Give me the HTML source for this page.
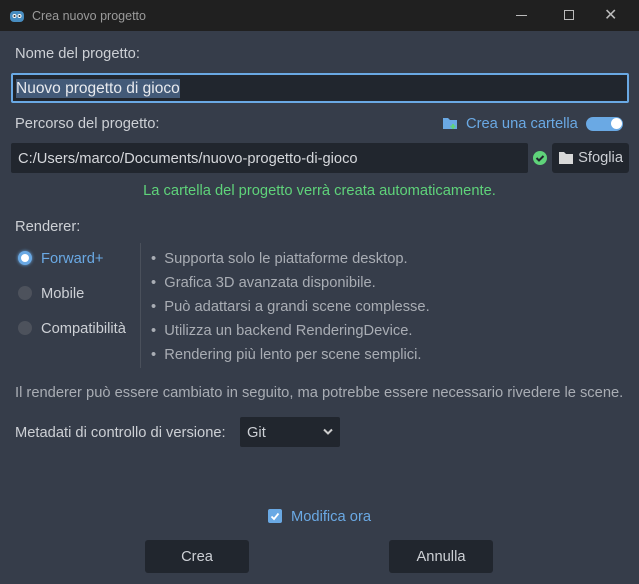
<!DOCTYPE html><html><head><style>
*{margin:0;padding:0;box-sizing:border-box}
body{width:639px;height:584px;background:#363d4a;font-family:"Liberation Sans","DejaVu Sans",sans-serif;font-size:14.7px;color:#cdd0d5;position:relative;overflow:hidden}
.a{position:absolute;white-space:nowrap}
.t{line-height:20px}
.inp{position:absolute;background:#21262e;border-radius:2px}
.btn{position:absolute;background:#21262e;border-radius:3px;text-align:center;line-height:35px}
.rad{position:absolute;width:14px;height:14px;border-radius:50%;background:#4d525c}
.li{color:#a9adb4}
</style></head><body>
<div class="a" style="left:0;top:0;width:639px;height:31px;background:#202020"></div>
<svg class="a" style="left:9px;top:8px" width="16" height="16" viewBox="0 0 16 16"><rect x="1" y="3" width="14" height="11" rx="4" fill="#478cbf"/><circle cx="5.5" cy="8" r="2" fill="#fff"/><circle cx="10.5" cy="8" r="2" fill="#fff"/><circle cx="5.5" cy="8" r="1" fill="#333"/><circle cx="10.5" cy="8" r="1" fill="#333"/></svg>
<div class="a" style="left:32px;top:9px;font-size:12.5px;color:#9a9a9a">Crea nuovo progetto</div>
<div class="a" style="left:516px;top:15px;width:11px;height:1px;background:#bbb"></div>
<div class="a" style="left:564px;top:10px;width:10px;height:10px;border:1px solid #bbb"></div>
<div class="a" style="left:604px;top:5px;font-size:16px;color:#bbb">✕</div>
<div class="a t" style="left:15px;top:44px">Nome del progetto:</div>
<div class="inp" style="left:11px;top:73px;width:618px;height:30px;border:2px solid #6aa9e4"></div>
<div class="a" style="left:16px;top:79px;line-height:19px;background:#435a78;color:#e8eaee;font-size:15.5px">Nuovo progetto di gioco</div>
<div class="a t" style="left:15px;top:114px">Percorso del progetto:</div>
<svg class="a" style="left:443px;top:116px" width="15" height="14"><path d="M0 2h5l2 2h7v9H0z" fill="#6aa9e4"/><path d="M10 8v5M7.5 10.5h5" stroke="#5fd37a" stroke-width="2"/></svg>
<div class="a t" style="left:466px;top:114px;color:#6aa9e4">Crea una cartella</div>
<div class="a" style="left:586px;top:117px;width:37px;height:14px;border-radius:7px;background:#6aa9e4"></div>
<div class="a" style="left:611px;top:118px;width:11px;height:11px;border-radius:50%;background:#fff"></div>
<div class="inp" style="left:11px;top:143px;width:517px;height:30px"></div>
<div class="a t" style="left:18px;top:149px;color:#d6d8dc">C:/Users/marco/Documents/nuovo-progetto-di-gioco</div>
<svg class="a" style="left:533px;top:151px" width="14" height="14"><circle cx="7" cy="7" r="7" fill="#5fd37a"/><path d="M3.5 7l2.5 2.5 4.5-4.5" stroke="#21262e" stroke-width="2" fill="none"/></svg>
<div class="btn" style="left:552px;top:143px;width:77px;height:30px;line-height:31px;text-align:right;padding-right:6px">Sfoglia</div>
<svg class="a" style="left:559px;top:151px" width="16" height="14"><path d="M0 1h5l2 2h7v10H0z" fill="#d8d8d8"/></svg>
<div class="a t" style="left:0;width:639px;text-align:center;top:181px;color:#5fd37a">La cartella del progetto verrà creata automaticamente.</div>
<div class="a t" style="left:15px;top:217px">Renderer:</div>
<div class="rad" style="left:18px;top:251px;background:#fff;border:3px solid #6aa9e4;box-shadow:0 0 3px #6aa9e4"></div>
<div class="a t" style="left:41px;top:249px;color:#6aa9e4">Forward+</div>
<div class="rad" style="left:18px;top:286px"></div>
<div class="a t" style="left:41px;top:284px">Mobile</div>
<div class="rad" style="left:18px;top:321px"></div>
<div class="a t" style="left:41px;top:319px">Compatibilità</div>
<div class="a" style="left:140px;top:243px;width:1px;height:125px;background:#4a505b"></div>
<div class="a li" style="left:151px;top:247px;line-height:24px">•&nbsp; Supporta solo le piattaforme desktop.<br>•&nbsp; Grafica 3D avanzata disponibile.<br>•&nbsp; Può adattarsi a grandi scene complesse.<br>•&nbsp; Utilizza un backend RenderingDevice.<br>•&nbsp; Rendering più lento per scene semplici.</div>
<div class="a t li" style="left:15px;top:383px">Il renderer può essere cambiato in seguito, ma potrebbe essere necessario rivedere le scene.</div>
<div class="a t" style="left:15px;top:423px">Metadati di controllo di versione:</div>
<div class="inp" style="left:240px;top:417px;width:100px;height:30px"></div>
<div class="a t" style="left:247px;top:423px">Git</div>
<svg class="a" style="left:323px;top:428px" width="10" height="8"><path d="M1 1.5l4 4 4-4" stroke="#ccc" stroke-width="2" fill="none"/></svg>
<svg class="a" style="left:268px;top:509px" width="14" height="14"><rect width="14" height="14" rx="2" fill="#6aa9e4"/><path d="M3.5 7.5l2.5 2.5 4.5-5.5" stroke="#fff" stroke-width="1.8" fill="none"/></svg>
<div class="a t" style="left:291px;top:507px;color:#6aa9e4">Modifica ora</div>
<div class="btn" style="left:145px;top:540px;width:104px;height:33px">Crea</div>
<div class="btn" style="left:389px;top:540px;width:104px;height:33px">Annulla</div>
</body></html>
